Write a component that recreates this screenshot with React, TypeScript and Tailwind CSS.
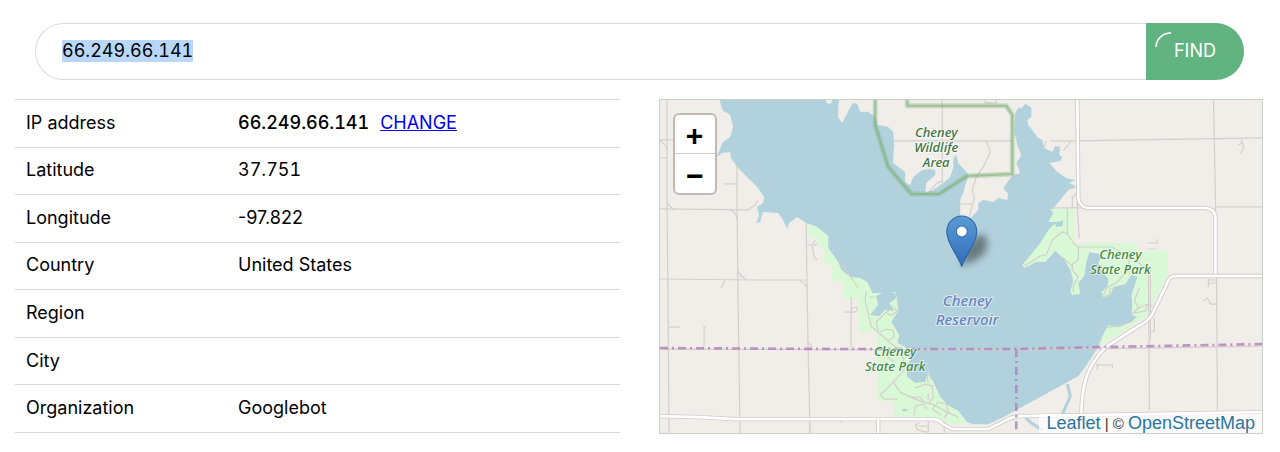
import { useEffect, useRef, type ReactNode } from 'react'

const IP = '66.249.66.141'

const ROWS: { label: string; value: ReactNode }[] = [
  {
    label: 'IP address',
    value: (
      <>
        <span className="font-medium tabular-nums">{IP}</span>
        <a href="#ip" className="ml-[11px] text-[#0000ee] underline">
          CHANGE
        </a>
      </>
    ),
  },
  { label: 'Latitude', value: <span className="tabular-nums">37.751</span> },
  { label: 'Longitude', value: '-97.822' },
  { label: 'Country', value: 'United States' },
  { label: 'Region', value: '' },
  { label: 'City', value: '' },
  { label: 'Organization', value: 'Googlebot' },
]

export default function App() {
  return (
    <main className="bg-white pt-[23px] pr-[17px] pb-[18px] pl-[15px] font-['Inter','Liberation_Sans',sans-serif] text-lg text-black">
      <SearchForm />
      <div className="mt-[19px] grid grid-cols-2 gap-[39px]">
        <DetailsTable />
        <MapPanel />
      </div>
    </main>
  )
}

function SearchForm() {
  const inputRef = useRef<HTMLInputElement>(null)

  useEffect(() => {
    inputRef.current?.focus()
    inputRef.current?.select()
  }, [])

  return (
    <form id="ip" className="mr-[19px] ml-5 flex h-[57px]" onSubmit={(e) => e.preventDefault()}>
      <input
        ref={inputRef}
        type="text"
        aria-label="IP address"
        defaultValue={IP}
        className="min-w-0 flex-1 rounded-l-full border border-r-0 border-[#d9d9d9] pb-0.5 pl-[26px] leading-[22px] tabular-nums outline-none selection:bg-[#b9d6fb] selection:text-black"
      />
      <button type="submit" className="relative w-[98px] rounded-r-full bg-[#61b37f] pb-0.5 text-white">
        <svg className="absolute top-2 left-2 h-8 w-8" viewBox="0 0 32 32" fill="none" aria-hidden="true">
          <path d="M2 16A14.5 14.5 0 0 1 17 2" stroke="#fff" strokeWidth="1.5" />
        </svg>
        FIND
      </button>
    </form>
  )
}

function DetailsTable() {
  return (
    <table className="h-[334px] w-full table-fixed border-collapse leading-6">
      <tbody>
        {ROWS.map((row) => (
          <tr key={row.label} className="border-y border-[#d6d6d6]">
            <th scope="row" className="w-[212px] pt-0 pb-px pl-[11px] text-left font-normal">
              {row.label}
            </th>
            <td className="pt-0 pb-px pl-[11px]">{row.value}</td>
          </tr>
        ))}
      </tbody>
    </table>
  )
}

function MapPanel() {
  return (
    <section aria-label="Map" className="relative h-[335px] overflow-hidden border border-[#c9d1c9] bg-[#f1eeea]">
      <MapDrawing />
      <div className="absolute top-[13px] left-[13px] flex w-[44px] flex-col overflow-hidden rounded-md border-2 border-[#bfbab5] bg-white font-['Liberation_Mono',monospace] text-[30px] leading-none font-bold">
        <button type="button" aria-label="Zoom in" className="h-[39px] border-b border-[#ccc] pt-2">
          +
        </button>
        <button type="button" aria-label="Zoom out" className="h-[39px] pt-2">
          −
        </button>
      </div>
      <div className="absolute right-0 bottom-0 bg-white/70 px-[7px] font-['Liberation_Sans',sans-serif] text-lg leading-[18px] text-[#2b75a3]">
        <a href="#leaflet">Leaflet</a>
        <span className="text-[15px] text-[#333]"> | © </span>
        <a href="#osm">OpenStreetMap</a>
      </div>
    </section>
  )
}

const WATER =
  'M719 99 723 111 730 115 733 127 730 137 722 143 719 152 715 158 722 153 730 152 731 158 737 167 747 177 757 187 764 197 763 203 757 207 759 215 756 223 760 222 763 212 778 213 783 220 787 229 789 223 797 217 806 223 817 227 828 236 828 248 838 262 841 270 850 277 860 279 867 282 872 293 895 293 896 312 891 322 899 335 897 343 905 347 910 360 906 367 907 377 915 383 925 382 928 372 932 380 940 397 947 405 958 411 967 422 973 424 988 424 1003 417 1060 386 1078 376 1085 367 1099 345 1125 325 1138 318 1142 290 1140 260 1075 250 1053 208 1060 200 1068 190 1076 187 1069 183 1075 180 1066 178 1057 172 1049 163 1060 161 1062 157 1059 155 1060 147 1055 146 1052 152 1044 148 1042 140 1038 138 1028 125 1027 120 1031 117 1031 108 1025 104 1022 108 1018 108 1015 113 1014 132 1017 145 1021 155 1016 163 1020 173 1013 175 1010 178 1003 188 1008 194 1007 200 998 198 993 202 983 200 978 203 978 210 973 215 967 222 960 216 960 200 963 193 965 185 968 177 967 173 958 163 956 155 953 158 953 168 950 177 943 183 933 190 925 193 926 183 935 175 935 170 928 169 922 170 913 177 910 185 905 182 905 172 893 163 893 157 894 145 893 132 888 127 878 125 875 117 868 112 860 112 857 104 853 103 850 108 842 123 838 117 838 108 839 99Z'

const EAST_PARK =
  'M1050 209H1074V243H1137V251H1167V275L1163 285 1152 303 1145 317 1120 333 1098 346 1104 332 1108 325 1118 327 1130 322 1137 317 1131 315 1132 304 1131 295 1137 277 1131 275 1125 284 1113 287 1110 295 1103 297 1101 292 1107 287 1108 279 1101 270 1098 262 1102 257 1095 250 1090 249 1086 262 1084 276 1078 283 1080 294 1072 295 1070 291 1073 281 1070 270 1063 258 1055 251 1045 262 1036 262 1024 268 1022 265 1032 253 1040 243 1048 230 1056 222 1048 222 1053 213Z'

const WEST_PARK =
  'M806 223 817 227 828 236 828 248 838 262 841 270 850 277 860 278 867 282 872 293 882 294 895 292 897 300 898 311 891 322 899 335 897 343 905 347 910 360 906 367 907 377 915 383 925 382 928 372 932 380 940 397 947 405 958 411 967 423 948 424 934 418 894 416V401H877V332H859V299H843V281H832V264H824V247H818V237H806Z'

const WEST_INLET = 'M876 296 884 292 895 293 896 298 889 303 894 311 885 310 879 316 870 315 878 305Z'

const BOUNDARY = [
  'M660 348 850 349 1016 349 1100 347 1262 344',
  'M1016 349V434',
]

const TRACKS = [
  'M667 99V203L668 300 669 434',
  'M660 140H675M660 158H667M660 209 748 210 755 205 758 200',
  'M660 141Q667 145 667 151M668 203Q670 208 675 210M730 210Q737 213 737 220',
  'M737 166V206L738 300 740 434M724 184H737',
  'M806 223 807 290 808 350 810 434',
  'M660 279 760 280 806 280M738 270Q740 277 746 279M800 281Q806 284 807 289M725 280 721 288',
  'M669 327H680M704 326V347M704 327 706 326M851 297V348M844 312H855Q859 308 856 307L851 309',
  'M660 349 1016 350 1262 346',
  'M942 99V184M894 141H1012M986 141 990 152 983 167 976 177 972 190 974 198 969 218',
  'M960 204H972M928 193 937 183 942 181M985 99V103H996V99',
  'M1050 141H1076L1262 138M1046 141 1044 147M1071 141 1063 151',
  'M1213 99 1215 200 1216 276 1217 410M1215 207H1262M1052 208H1087',
  'M1241 138 1243 148 1240 154M1238 145 1242 142',
  'M1067 209V234L1074 244 1078 247H1111L1117 250 1136 261 1148 270 1149 410M1078 247V260L1072 264 1072 270 1078 277 1073 286V292',
  'M1077 200V208L1079 238M1072 208V197L1077 193',
  'M1024 266 1040 256 1046 255 1052 240 1062 232 1067 234M1063 258 1072 266',
  'M1147 243H1157V239M1148 249H1155M1130 257 1126 272 1118 281 1107 288 1103 294 1109 296 1110 288',
  'M1150 270V340M1139 288 1134 300 1138 308 1131 315M1138 308 1147 304 1152 306M1132 313 1145 311 1147 304',
  'M1107 327 1120 326 1133 321M1150 331H1154V318M1208 280H1215M1208 287V279M1208 283H1215M1203 301 1207 298 1210 304H1216M1097 365H1112M1097 363V370M1112 364V368',
  'M866 291 865 300 868 313 871 326 882 336 894 346 903 358 904 370 893 382 880 395 884 399 897 399',
  'M869 297H874M878 331 876 322 883 315 889 310 893 306M894 308 897 311 892 315 887 314M880 332 886 329 893 330 894 337 887 341',
  'M893 382 900 392 913 398 923 402 932 404 947 412 958 417M915 388 925 384 932 386 933 397 928 404M928 393V400',
  'M914 415 915 406 923 404 927 409M912 397 920 397 925 403M932 409 938 402 946 404 948 412 944 418M932 409 941 415M893 350 885 353 893 362',
  'M928 383 927 376 929 374 931 380M919 423 915 425 918 430 927 432M928 421V432M919 426H928M944 421V433M810 434 809 418M839 420 842 422M851 250',
  'M806 245 812 245 815 240M812 245 814 257 817 260M814 246 817 243M840 262 850 276 858 288',
  'M809 343 812 347',
]

const ROADS = [
  'M1077 99 1078 199Q1080 207 1087 208H1205Q1214 209 1215 216V276',
  'M1262 276H1174Q1168 277 1166 285L1152 314Q1148 321 1138 326L1110 344Q1100 350 1091 366Q1081 383 1081 416',
  'M660 416 700 417 735 419H932Q938 419 943 424L952 429H988L1004 421Q1012 416 1020 416L1262 412',
  'M878 419V434',
]

const WILDLIFE = 'M875 98V125L888 167 911 194H939L967 176 1012 174V115L1006 106H907V98'

function MapDrawing() {
  return (
    <svg
      className="block h-full w-full font-['Noto_Sans',sans-serif]"
      viewBox="660 100 602 333"
      preserveAspectRatio="xMidYMid slice"
      fill="none"
      strokeLinejoin="round"
    >
      <defs>
        <linearGradient id="pin" x1="0" y1="0" x2="0" y2="1">
          <stop offset="0" stopColor="#5b9bd3" />
          <stop offset="1" stopColor="#2e6cbb" />
        </linearGradient>
        <filter id="soft" x="-50%" y="-50%" width="200%" height="200%">
          <feGaussianBlur stdDeviation="3.5" />
        </filter>
      </defs>

      <path d={WATER} fill="#b1d1dd" />
      <path d={EAST_PARK} fill="#d9f9d6" />
      <path d={WEST_PARK} fill="#d9f9d6" />
      <path d={WEST_INLET} fill="#b1d1dd" />
      <path d="M1054 223 1063 220 1062 226 1056 227ZM902 409H907V411H902Z" fill="#b1d1dd" />
      <circle cx="829" cy="101" r="3" fill="#f1eeea" />
      <path d="M1067 384 1070 396 1062 414M1022 414 1030 422 1042 430" stroke="#b1d1dd" strokeWidth="3" />

      {TRACKS.map((d) => (
        <path key={d} d={d} stroke="#d3cfcc" strokeWidth="1.2" />
      ))}
      {ROADS.map((d) => (
        <g key={d}>
          <path d={d} stroke="#cfccca" strokeWidth="4.4" />
          <path d={d} stroke="#fff" strokeWidth="2.6" />
        </g>
      ))}

      <path d={WILDLIFE} stroke="#7fb27c" strokeOpacity="0.35" strokeWidth="5" />
      <path d={WILDLIFE} stroke="#7fb27c" strokeOpacity="0.6" strokeWidth="2" />

      {BOUNDARY.map((d) => (
        <path key={d} d={d} stroke="#b583c0" strokeOpacity="0.85" strokeWidth="2.6" strokeDasharray="8 4 2 4" />
      ))}

      <Label x={936} y={137} lines={['Cheney', 'Wildlife', 'Area']} className="fill-[#3c7442] text-[13px]" />
      <Label x={1120} y={259} lines={['Cheney', 'State Park']} className="fill-[#438a46] text-[13px]" />
      <Label x={895} y={356} lines={['Cheney', 'State Park']} className="fill-[#438a46] text-[13px]" />
      <Label x={967} y={306} step={19} lines={['Cheney', 'Reservoir']} className="fill-[#6585be] text-[15px]" />

      <path d="M962 266Q964 250 970 242Q980 230 986 238Q990 250 978 259Z" fill="#222" fillOpacity="0.5" filter="url(#soft)" />
      <path
        d="M961.500 266.500C958 256 946.500 244 946.500 231.500A15 15.500 0 0 1 976.500 231.500C976.500 244 965 256 961.500 266.500Z"
        fill="url(#pin)"
        stroke="#2c629d"
      />
      <circle cx="961.500" cy="231.500" r="5.500" fill="#fff" stroke="#2f6cab" />
    </svg>
  )
}

function Label({
  x,
  y,
  step = 15,
  lines,
  className,
}: {
  x: number
  y: number
  step?: number
  lines: string[]
  className: string
}) {
  return (
    <text
      textAnchor="middle"
      className={`font-medium italic ${className}`}
      stroke="#fff"
      strokeOpacity="0.6"
      strokeWidth="2"
      paintOrder="stroke"
    >
      {lines.map((line, i) => (
        <tspan key={line} x={x} y={y + i * step}>
          {line}
        </tspan>
      ))}
    </text>
  )
}
